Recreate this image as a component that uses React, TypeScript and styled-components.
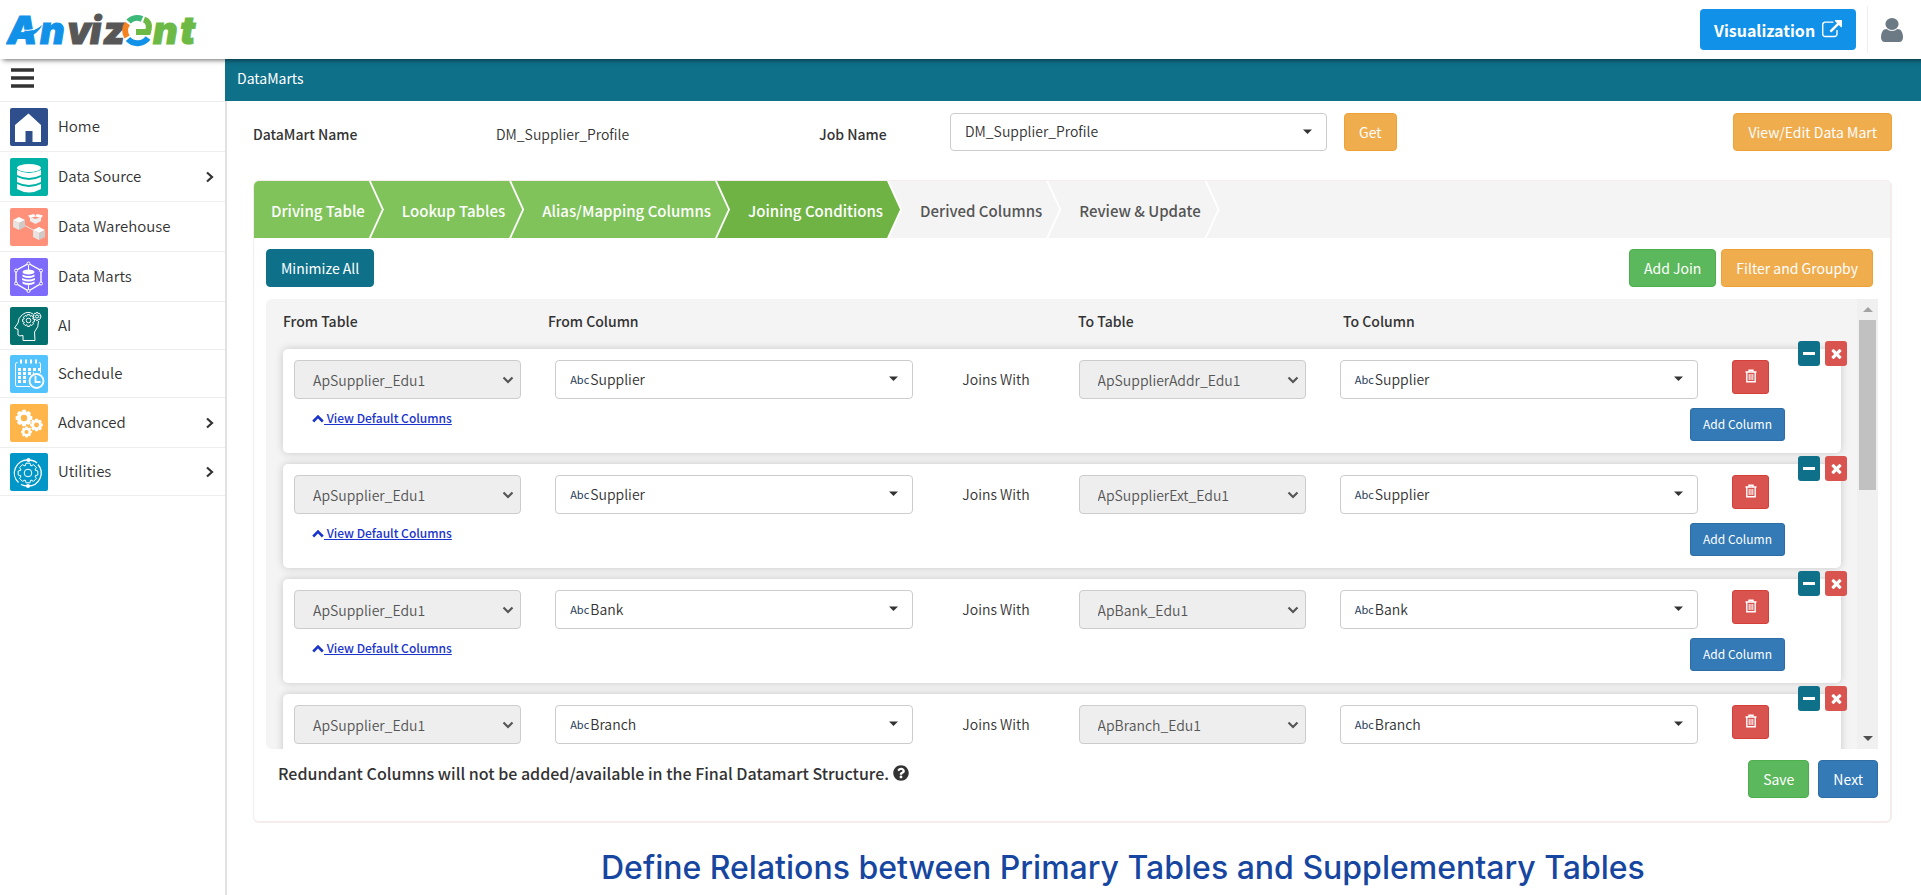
import React from "react";
import styled, { createGlobalStyle, css } from "styled-components";
import { FaQuestionCircle } from "react-icons/fa";

const GlobalStyle = createGlobalStyle`
  *, *::before, *::after { box-sizing: border-box; }
  body {
    margin: 0;
    background: #fff;
    color: #333;
    font-family: "Noto Sans CJK SC", "Open Sans", sans-serif;
    font-size: 15px;
    font-weight: 350;
    line-height: 20px;
  }
  button, select { font: inherit; }
  button { cursor: pointer; }
`;

const Page = styled.div`
  display: flex;
  flex-direction: column;
  min-height: 100vh;
`;

const Header = styled.header`
  position: relative;
  z-index: 2;
  display: flex;
  align-items: center;
  justify-content: space-between;
  height: 59px;
  padding: 0 18px 0 6px;
  background: #fff;
  box-shadow: 3px 1px 5px rgba(0, 0, 0, 0.6);
`;

const HeaderActions = styled.div`
  display: flex;
  align-items: center;
`;

const VisualizationButton = styled.button`
  display: flex;
  align-items: center;
  justify-content: space-between;
  width: 156px;
  height: 41px;
  padding: 0 14px;
  border: 0;
  border-radius: 4px;
  background: #1192e8;
  color: #fff;
  font-size: 16px;
  font-weight: 700;
`;

const UserButton = styled.button`
  display: flex;
  align-items: center;
  justify-content: flex-end;
  width: 36px;
  height: 47px;
  margin-left: 11px;
  padding: 0;
  border: 0;
  border-left: 1px solid #eee;
  background: none;
  color: #6c7a86;
`;

const Body = styled.div`
  display: flex;
  flex: 1;
`;

const Sidebar = styled.nav`
  flex: 0 0 225px;
`;

const MenuToggle = styled.button`
  display: flex;
  align-items: center;
  width: 100%;
  height: 43px;
  padding: 0 0 4px 11px;
  border: 0;
  border-bottom: 1px solid #eee;
  background: none;
  color: #333;
`;

const NavList = styled.ul`
  margin: 0;
  padding: 0;
  list-style: none;
`;

const NavLink = styled.a<{ $tall?: boolean }>`
  display: flex;
  align-items: center;
  height: ${(p) => (p.$tall ? 50 : 48)}px;
  padding: 0 10px;
  border-bottom: 1px solid #eee;
  color: #333;
  text-decoration: none;
`;

const NavLabel = styled.span`
  flex: 1;
  padding: 0 0 2px 10px;
`;

const Main = styled.main`
  display: flex;
  flex: 1;
  flex-direction: column;
  min-width: 0;
`;

const TitleBar = styled.h1`
  height: 42px;
  margin: 0;
  padding: 9px 12px;
  background: #0f708a;
  color: #fff;
  font-size: 14px;
  font-weight: 400;
  line-height: 20px;
`;

const Content = styled.div`
  flex: 1;
  padding: 12px 29px 16px 26px;
  border-left: 2px solid #e2e2e2;
`;

const JobRow = styled.div`
  display: flex;
  height: 38px;
  margin-bottom: 29px;
`;

const caption = css`
  padding-top: 11px;
  font-size: 14px;
  font-weight: 500;
`;

const MartCaption = styled.span`
  width: 243px;
  ${caption}
`;

const JobCaption = styled.label`
  width: 131px;
  ${caption}
`;

const MartName = styled.span`
  width: 323px;
  padding-top: 11px;
  font-size: 14px;
`;

const tones = {
  teal: ["#0f708a", "#0f708a"],
  green: ["#5cb85c", "#4cae4c"],
  orange: ["#f0ad4e", "#eea236"],
  blue: ["#337ab7", "#2e6da4"],
  red: ["#d9534f", "#d43f3a"],
};

const Button = styled.button<{ $tone: keyof typeof tones; $small?: boolean }>`
  height: ${(p) => (p.$small ? 33 : 38)}px;
  padding: ${(p) => (p.$small ? "0 12px 2px" : "0 14px 1px")};
  border: 1px solid ${(p) => tones[p.$tone][1]};
  border-radius: ${(p) => (p.$small ? 3 : 4)}px;
  background: ${(p) => tones[p.$tone][0]};
  color: #fff;
  font-size: ${(p) => (p.$small ? 12 : 14)}px;
  font-weight: 400;
  line-height: 20px;
  white-space: nowrap;
`;

const GetButton = styled(Button)`
  margin-left: 17px;
`;

const ViewButton = styled(Button)`
  margin-left: auto;
`;

const Panel = styled.section`
  border: 1px solid #f5ecec;
  border-right-width: 2px;
  border-bottom-width: 2px;
  border-radius: 6px;
  overflow: hidden;
`;

const Wizard = styled.nav`
  display: flex;
  height: 57px;
  background: #f4f4f4;
`;

const arrow = css`
  clip-path: polygon(0 0, calc(100% - 13px) 0, 100% 50%, calc(100% - 13px) 100%, 0 100%);
`;

const Step = styled.div<{ $order: number }>`
  position: relative;
  z-index: ${(p) => 10 - p.$order};
  flex: none;
  margin-right: -15px;
  padding-right: 2px;
  background: #fff;
  ${arrow}
`;

type StepState = "done" | "active" | "todo";
const stepColors: Record<StepState, string> = { done: "#80c35b", active: "#6fb345", todo: "#f4f4f4" };

const StepButton = styled.button<{ $state: StepState; $first?: boolean }>`
  height: 57px;
  padding: 2px 17px 0 ${(p) => (p.$first ? 17 : 33)}px;
  border: 0;
  background: ${(p) => stepColors[p.$state]};
  color: ${(p) => (p.$state === "todo" ? "#555" : "#fff")};
  font-size: 15px;
  font-weight: 500;
  white-space: nowrap;
  ${arrow}
`;

const Toolbar = styled.div`
  display: flex;
  gap: 5px;
  margin: 11px 17px 12px 12px;

  & > :first-child { margin-right: auto; }
`;

const JoinArea = styled.div`
  display: flex;
  height: 450px;
  margin: 0 12px;
  border-radius: 6px 0 0 6px;
  background: #f4f4f4;
  overflow: hidden;
`;

const JoinList = styled.div`
  flex: 1;
  min-width: 0;
  padding: 0 16px 0 17px;
`;

const ColumnHeads = styled.div`
  display: grid;
  grid-template-columns: 265fr 530fr 265fr 498fr;
  height: 50px;
  padding-top: 12px;
  font-size: 14px;
  font-weight: 500;
`;

const Card = styled.article`
  position: relative;
  height: 104px;
  margin-bottom: 11px;
  padding: 11px 12px 0 11px;
  border-radius: 5px;
  background: #fff;
  box-shadow: 0 0 8px rgba(0, 0, 0, 0.18);
`;

const CardFields = styled.div`
  display: grid;
  grid-template-columns: 227fr 358fr 97fr 227fr 358fr 97px;
  column-gap: 34px;
`;

const CardExtras = styled.div`
  display: flex;
  justify-content: space-between;
  align-items: flex-start;
  margin-top: 9px;
  padding: 0 44px 0 18px;
`;

const CardControls = styled.div`
  position: absolute;
  top: -8px;
  right: -6px;
  display: flex;
  gap: 5px;
`;

const MiniButton = styled.button<{ $tone: keyof typeof tones }>`
  display: grid;
  place-items: center;
  width: 22px;
  height: 25px;
  padding: 0;
  border: 0;
  border-radius: 3px;
  background: ${(p) => tones[p.$tone][0]};
  color: #fff;
`;

const TrashButton = styled(Button)`
  width: 37px;
  height: 34px;
  padding: 0 0 2px;
  line-height: 0;
`;

const FieldBox = styled.div<{ $disabled?: boolean; $w?: number }>`
  display: flex;
  align-items: center;
  ${(p) => p.$w && `flex: 0 0 ${p.$w}px;`}
  height: ${(p) => (p.$w ? 38 : 39)}px;
  padding: ${(p) => (p.$disabled ? "0 6px 0 18px" : "0 14px 2px")};
  border: 1px solid #ccc;
  border-radius: 4px;
  background: ${(p) => (p.$disabled ? "#eee" : "#fff")};

  svg { flex: none; pointer-events: none; }
`;

const TypeTag = styled.span`
  margin-right: 1px;
  color: #1f3b5a;
  font-size: 11px;
  font-weight: 400;
`;

const SelectInput = styled.select`
  flex: 1;
  min-width: 0;
  height: 28px;
  padding: 0;
  border: 0;
  background: transparent;
  color: #333;
  font-size: 14px;
  appearance: none;
  opacity: 1;

  &:disabled { color: #555; }
`;

const JoinsWith = styled.span`
  align-self: center;
  padding-bottom: 1px;
  font-size: 14px;
  text-align: center;
  white-space: nowrap;
`;

const DefaultsLink = styled.a`
  display: flex;
  align-items: center;
  color: #1a34cc;
  font-size: 12px;
  font-weight: 500;
  text-decoration: underline;
  white-space: pre;
`;

const ScrollTrack = styled.div`
  display: flex;
  flex-direction: column;
  align-items: center;
  justify-content: space-between;
  width: 21px;
  background: #f0f0f0;
`;

const ScrollThumb = styled.div`
  width: 17px;
  height: 170px;
  margin-bottom: auto;
  background: #c1c1c1;
`;

const ScrollArrow = styled.div<{ $down?: boolean }>`
  width: 10px;
  height: 21px;
  display: grid;
  place-items: center;

  &::before {
    content: "";
    border: 5px solid transparent;
    border-top-width: ${(p) => (p.$down ? 5 : 0)}px;
    border-bottom-width: ${(p) => (p.$down ? 0 : 5)}px;
    border-${(p) => (p.$down ? "top" : "bottom")}-color: ${(p) => (p.$down ? "#505050" : "#a3a3a3")};
  }
`;

const PanelFooter = styled.footer`
  display: flex;
  justify-content: space-between;
  padding: 11px 12px 23px 24px;
`;

const Note = styled.p`
  display: flex;
  align-items: center;
  gap: 4px;
  height: 26px;
  margin: 0;
  font-size: 16px;
  font-weight: 500;
`;

const FooterActions = styled.div`
  display: flex;
  gap: 9px;
`;

const Tagline = styled.h2`
  margin: 25px 0 0 348px;
  color: #1646a0;
  font-family: "Inter", "Open Sans", sans-serif;
  font-size: 32px;
  font-weight: 500;
  line-height: 40px;
  white-space: nowrap;
`;

const Logo = () => (
  <svg width="194" height="48" viewBox="0 0 194 48" role="img" aria-label="Anvizent">
    <g fontFamily="Inter" fontSize="38" fontStyle="italic" fontWeight="900" strokeWidth="1">
      <text x="1" y="38" fill="#1192e8" stroke="#1192e8">A</text>
      <text x="34" y="38" fill="#1192e8" stroke="#1192e8">n</text>
      <text x="61" y="38" fill="#575757" stroke="#575757">v</text>
      <text x="84" y="38" fill="#575757" stroke="#575757">i</text>
      <text x="97" y="38" fill="#575757" stroke="#575757">z</text>
      <text x="147" y="38" fill="#6cba45" stroke="#6cba45">n</text>
      <text x="174" y="38" fill="#6cba45" stroke="#6cba45">t</text>
    </g>
    <path d="M14 26Q26 28 37 18Q31 30 20 31Z" fill="#1192e8" />
    <path d="M17 24Q27 26 37 18" fill="none" stroke="#fff" />
    <g fill="none" strokeWidth="6" transform="translate(131 24)">
      <path d="M-9.5 -6.5A12 12 0 0 0 -10 7" stroke="#f58220" />
      <path d="M-8.5 -8.5A12 12 0 0 1 5 -11" stroke="#3cb878" />
      <path d="M7 -10.5Q14 -8 11 2H-1" stroke="#6cba45" />
      <path d="M-9 9A13 13 0 0 0 11 8" stroke="#1192e8" />
    </g>
  </svg>
);

const ExternalLink = () => (
  <svg width="20" height="20" viewBox="0 0 1792 1792" fill="currentColor" aria-hidden="true">
    <path d="M1408 928v320q0 119-84.5 203.5t-203.5 84.5h-832q-119 0-203.5-84.5t-84.5-203.5v-832q0-119 84.5-203.5t203.5-84.5h704q14 0 23 9t9 23v64q0 14-9 23t-23 9h-704q-66 0-113 47t-47 113v832q0 66 47 113t113 47h832q66 0 113-47t47-113v-320q0-14 9-23t23-9h64q14 0 23 9t9 23zm384-864v512q0 26-19 45t-45 19-45-19l-176-176-652 652q-10 10-23 10t-23-10l-114-114q-10-10-10-23t10-23l652-652-176-176q-19-19-19-45t19-45 45-19h512q26 0 45 19t19 45z" />
  </svg>
);

const UserIcon = () => (
  <svg width="22" height="24" viewBox="256 128 1280 1536" preserveAspectRatio="none" fill="currentColor" aria-hidden="true">
    <path d="M1536 1399q0 109-62.5 187t-150.5 78h-854q-88 0-150.5-78t-62.5-187q0-85 8.5-160.5t31.5-152 58.5-131 94-89 134.5-34.5q131 128 313 128t313-128q76 0 134.5 34.5t94 89 58.5 131 31.5 152 8.5 160.5zm-256-887q0 159-112.5 271.5t-271.5 112.5-271.5-112.5-112.5-271.5 112.5-271.5 271.5-112.5 271.5 112.5 112.5 271.5z" />
  </svg>
);

const Bars = () => (
  <svg width="23" height="20" viewBox="0 0 23 20" aria-hidden="true">
    <path d="M0 2h23M0 10h23M0 18h23" stroke="currentColor" strokeWidth="3.6" />
  </svg>
);

const ChevronRight = () => (
  <svg width="10" height="14" viewBox="0 0 10 14" aria-hidden="true">
    <path d="M2 2.5L7 7L2 11.5" fill="none" stroke="#333" strokeWidth="2.2" />
  </svg>
);

const ChevronUp = () => (
  <svg width="12" height="9" viewBox="0 0 12 9" aria-hidden="true">
    <path d="M1.2 7.5L6 2.7L10.8 7.5" fill="none" stroke="currentColor" strokeWidth="2.6" />
  </svg>
);

const ChevronDown = () => (
  <svg width="12" height="8" viewBox="0 0 12 8" aria-hidden="true">
    <path d="M1.5 1.5L6 6L10.5 1.5" fill="none" stroke="#555" strokeWidth="2.2" />
  </svg>
);

const Caret = () => (
  <svg width="9" height="5" viewBox="0 0 9 5" aria-hidden="true">
    <path d="M0 0.5H9L4.5 5Z" fill="#333" />
  </svg>
);

const Trash = () => (
  <svg width="12" height="14" viewBox="0 0 12 14" fill="none" stroke="#fff" aria-hidden="true">
    <path d="M0.5 3H11.5M4 3V1.2H8V3M1.8 3V12.7H10.2V3" strokeWidth="1.4" />
    <path d="M4.2 5V11M6 5V11M7.8 5V11" />
  </svg>
);

const Minus = () => (
  <svg width="12" height="5" viewBox="0 0 12 5" aria-hidden="true">
    <path d="M0 1H12V4H0Z" fill="#fff" />
  </svg>
);

const Cross = () => (
  <svg width="15" height="15" viewBox="0 0 1792 1792" fill="#fff" aria-hidden="true">
    <path d="M1490 1322q0 40-28 68l-136 136q-28 28-68 28t-68-28l-294-294-294 294q-28 28-68 28t-68-28l-136-136q-28-28-28-68t28-68l294-294-294-294q-28-28-28-68t28-68l136-136q28-28 68-28t68 28l294 294 294-294q28-28 68-28t68 28l136 136q28 28 28 68t-28 68l-294 294 294 294q28 28 28 68z" />
  </svg>
);

/** Toothed wheel with a round hole, drawn round a centre point. */
const Gear = ({ x, y, r, outline }: { x: number; y: number; r: number; outline?: boolean }) => {
  const teeth = Array.from({ length: 8 }, (_, i) => {
    const a = (i * Math.PI) / 4;
    const at = (d: number, o: number) => `${x + Math.cos(a + o) * d} ${y + Math.sin(a + o) * d}`;
    return `${i ? "L" : "M"}${at(r * 0.76, -0.38)}L${at(r, -0.2)}L${at(r, 0.2)}L${at(r * 0.76, 0.38)}`;
  }).join("");
  const h = r * 0.38;
  const hole = `M${x - h} ${y}a${h} ${h} 0 1 0 ${2 * h} 0a${h} ${h} 0 1 0 ${-2 * h} 0Z`;
  return outline ? (
    <path d={`${teeth}Z${hole}`} fill="none" stroke="#fff" />
  ) : (
    <path d={`${teeth}Z${hole}`} fill="#fff" fillRule="evenodd" />
  );
};

const Tile = ({ color, children }: { color: string; children: React.ReactNode }) => (
  <svg width="38" height="38" viewBox="0 0 38 38" aria-hidden="true">
    <rect width="38" height="38" rx="2" fill={color} />
    {children}
  </svg>
);

const Cube = ({ x, y }: { x: number; y: number }) => (
  <g transform={`translate(${x} ${y})`}>
    <path d="M6 0L12 3L6 6L0 3Z" fill="#fff" />
    <path d="M0 3L6 6V13L0 10Z" fill="#e9e4e1" />
    <path d="M12 3L6 6V13L12 10Z" fill="#cfcac8" />
  </g>
);

const navItems = [
  {
    label: "Home",
    tall: true,
    icon: (
      <Tile color="#2f4f8c">
        <path d="M5 17L18.5 5.5L31 17V34H22.5V23H15.5V34H5Z" fill="#fff" />
      </Tile>
    ),
  },
  {
    label: "Data Source",
    tall: true,
    more: true,
    icon: (
      <Tile color="#00b2a5">
        <ellipse cx="19" cy="10" rx="12" ry="4" fill="#fff" />
        <path d="M7 12Q19 18 31 12V17Q19 23 7 17ZM7 19Q19 25 31 19V24Q19 30 7 24ZM7 26Q19 32 31 26V31Q19 38 7 31Z" fill="#fff" />
      </Tile>
    ),
  },
  {
    label: "Data Warehouse",
    tall: true,
    icon: (
      <Tile color="#ff907a">
        <path d="M12 16L25 23" stroke="#e9e4e1" />
        <Cube x={3} y={9} />
        <Cube x={23} y={19} />
        <path d="M20 9V13L25.5 16L31 13V9L25.5 11Z" fill="#eee" />
        <path d="M18 7.5L24 6L25.5 8L27 6L33 7.5L31 10L25.5 8.5L20 10Z" fill="#fff" />
      </Tile>
    ),
  },
  {
    label: "Data Marts",
    tall: true,
    icon: (
      <Tile color="#7f6bfb">
        <g fill="none" stroke="#fff">
          <path d="M18.5 5.5L31 12.5V25.5L18.5 33L6 25.5V12.5Z" strokeWidth="1.4" />
          <path d="M18.5 6V13M18.5 26V33" />
          <g fill="#7f6bfb">
            <circle cx="18.5" cy="5.5" r="1.5" />
            <circle cx="31" cy="12.5" r="1.5" />
            <circle cx="31" cy="25.5" r="1.5" />
            <circle cx="18.5" cy="33" r="1.5" />
            <circle cx="6" cy="25.5" r="1.5" />
            <circle cx="6" cy="12.5" r="1.5" />
          </g>
        </g>
        <ellipse cx="18.5" cy="14" rx="6" ry="2.4" fill="#fff" />
        <path d="M12.5 16.5Q18.5 19.5 24.5 16.5V18.5Q18.5 21.500 12.5 18.5ZM12 20Q18.5 23 25 20V22Q18.5 25 12 22ZM12.5 23.5Q18.5 26.5 24.5 23.5V25.5Q18.5 28.5 12.5 25.5Z" fill="#fff" />
      </Tile>
    ),
  },
  {
    label: "AI",
    icon: (
      <Tile color="#04716f">
        <path d="M25 33.5L24.5 25Q29 20 28.5 14M23 7Q18 3.5 12.5 7.5Q8 11 8 16L4.5 21L8 22.5V28Q9 29.5 13 28.5V33.5H25" fill="none" stroke="#fff" />
        <Gear x={18.5} y={13.5} r={6} outline />
        <Gear x={27} y={9.5} r={4} outline />
      </Tile>
    ),
  },
  {
    label: "Schedule",
    icon: (
      <Tile color="#52c3ff">
        <g fill="none" stroke="#fff">
          <path d="M20 31.5H7Q5.5 31.5 5.5 29.5V9Q5.5 7.5 7.5 7.5M29 7.5Q30.5 7.5 30.5 9V18" />
          <path d="M10 6.5H28" strokeWidth="4" strokeDasharray="2 3" />
          <path d="M8 14.5H30M8 18.5H24" strokeWidth="3" strokeDasharray="3 2" />
          <path d="M8 22.5H18M8 26.5H18" strokeWidth="3" strokeDasharray="3 2" />
          <circle cx="26.5" cy="26" r="7" strokeWidth="1.8" fill="#52c3ff" />
          <path d="M25.5 21V27H30.5" strokeWidth="1.8" />
        </g>
      </Tile>
    ),
  },
  {
    label: "Advanced",
    tall: true,
    more: true,
    icon: (
      <Tile color="#ffb54a">
        <Gear x={14} y={14} r={8.5} />
        <Gear x={26.5} y={21} r={6.5} />
        <Gear x={16.5} y={28} r={5.5} />
      </Tile>
    ),
  },
  {
    label: "Utilities",
    more: true,
    icon: (
      <Tile color="#0097c8">
        <Gear x={18} y={20} r={10} outline />
        <g fill="none" stroke="#fff" strokeWidth="1.3">
          <path d="M18 7A13 13 0 0 0 8.5 29.5M28 11.5A13 13 0 0 1 18 33M11 31.5Q14 33 18 33M18 7Q24 7 27 10" />
        </g>
        <circle cx="18.5" cy="7" r="2" fill="#fff" />
        <circle cx="18" cy="33" r="2" fill="#fff" />
      </Tile>
    ),
  },
];

const steps: { label: string; state: StepState }[] = [
  { label: "Driving Table", state: "done" },
  { label: "Lookup Tables", state: "done" },
  { label: "Alias/Mapping Columns", state: "done" },
  { label: "Joining Conditions", state: "active" },
  { label: "Derived Columns", state: "todo" },
  { label: "Review & Update", state: "todo" },
];

const joins = [
  { from: "ApSupplier_Edu1", to: "ApSupplierAddr_Edu1", column: "Supplier" },
  { from: "ApSupplier_Edu1", to: "ApSupplierExt_Edu1", column: "Supplier" },
  { from: "ApSupplier_Edu1", to: "ApBank_Edu1", column: "Bank" },
  { from: "ApSupplier_Edu1", to: "ApBranch_Edu1", column: "Branch" },
];

const TableField = ({ label, value }: { label: string; value: string }) => (
  <FieldBox $disabled>
    <SelectInput aria-label={label} disabled defaultValue={value}>
      <option>{value}</option>
    </SelectInput>
    <ChevronDown />
  </FieldBox>
);

const ColumnField = ({ label, value }: { label: string; value: string }) => (
  <FieldBox>
    <TypeTag>Abc</TypeTag>
    <SelectInput aria-label={label} defaultValue={value}>
      <option>{value}</option>
    </SelectInput>
    <Caret />
  </FieldBox>
);

export default function App() {
  return (
    <Page>
      <GlobalStyle />
      <Header>
        <Logo />
        <HeaderActions>
          <VisualizationButton type="button">
            Visualization <ExternalLink />
          </VisualizationButton>
          <UserButton type="button" aria-label="Account">
            <UserIcon />
          </UserButton>
        </HeaderActions>
      </Header>
      <Body>
        <Sidebar>
          <MenuToggle type="button" aria-label="Toggle menu">
            <Bars />
          </MenuToggle>
          <NavList>
            {navItems.map((item) => (
              <li key={item.label}>
                <NavLink href="#" $tall={item.tall}>
                  {item.icon}
                  <NavLabel>{item.label}</NavLabel>
                  {item.more && <ChevronRight />}
                </NavLink>
              </li>
            ))}
          </NavList>
        </Sidebar>
        <Main>
          <TitleBar>DataMarts</TitleBar>
          <Content>
            <JobRow>
              <MartCaption>DataMart Name</MartCaption>
              <MartName>DM_Supplier_Profile</MartName>
              <JobCaption htmlFor="job">Job Name</JobCaption>
              <FieldBox $w={377}>
                <SelectInput id="job" defaultValue="DM_Supplier_Profile">
                  <option>DM_Supplier_Profile</option>
                </SelectInput>
                <Caret />
              </FieldBox>
              <GetButton type="button" $tone="orange">Get</GetButton>
              <ViewButton type="button" $tone="orange">View/Edit Data Mart</ViewButton>
            </JobRow>
            <Panel>
              <Wizard aria-label="Steps">
                {steps.map((step, i) => (
                  <Step key={step.label} $order={i}>
                    <StepButton type="button" $state={step.state} $first={i === 0}>
                      {step.label}
                    </StepButton>
                  </Step>
                ))}
              </Wizard>
              <Toolbar>
                <Button type="button" $tone="teal">Minimize All</Button>
                <Button type="button" $tone="green">Add Join</Button>
                <Button type="button" $tone="orange">Filter and Groupby</Button>
              </Toolbar>
              <JoinArea>
                <JoinList>
                  <ColumnHeads>
                    <span>From Table</span>
                    <span>From Column</span>
                    <span>To Table</span>
                    <span>To Column</span>
                  </ColumnHeads>
                  {joins.map((join) => (
                    <Card key={join.to}>
                      <CardFields>
                        <TableField label="From table" value={join.from} />
                        <ColumnField label="From column" value={join.column} />
                        <JoinsWith>Joins With</JoinsWith>
                        <TableField label="To table" value={join.to} />
                        <ColumnField label="To column" value={join.column} />
                        <TrashButton type="button" $tone="red" $small aria-label="Delete column">
                          <Trash />
                        </TrashButton>
                      </CardFields>
                      <CardExtras>
                        <DefaultsLink href="#">
                          <ChevronUp />
                          <span> View Default Columns</span>
                        </DefaultsLink>
                        <Button type="button" $tone="blue" $small>Add Column</Button>
                      </CardExtras>
                      <CardControls>
                        <MiniButton type="button" $tone="teal" aria-label="Minimize join">
                          <Minus />
                        </MiniButton>
                        <MiniButton type="button" $tone="red" aria-label="Remove join">
                          <Cross />
                        </MiniButton>
                      </CardControls>
                    </Card>
                  ))}
                </JoinList>
                <ScrollTrack aria-hidden="true">
                  <ScrollArrow />
                  <ScrollThumb />
                  <ScrollArrow $down />
                </ScrollTrack>
              </JoinArea>
              <PanelFooter>
                <Note>
                  Redundant Columns will not be added/available in the Final Datamart Structure.
                  <FaQuestionCircle size={16} aria-hidden="true" />
                </Note>
                <FooterActions>
                  <Button type="button" $tone="green">Save</Button>
                  <Button type="button" $tone="blue">Next</Button>
                </FooterActions>
              </PanelFooter>
            </Panel>
            <Tagline>Define Relations between Primary Tables and Supplementary Tables</Tagline>
          </Content>
        </Main>
      </Body>
    </Page>
  );
}
